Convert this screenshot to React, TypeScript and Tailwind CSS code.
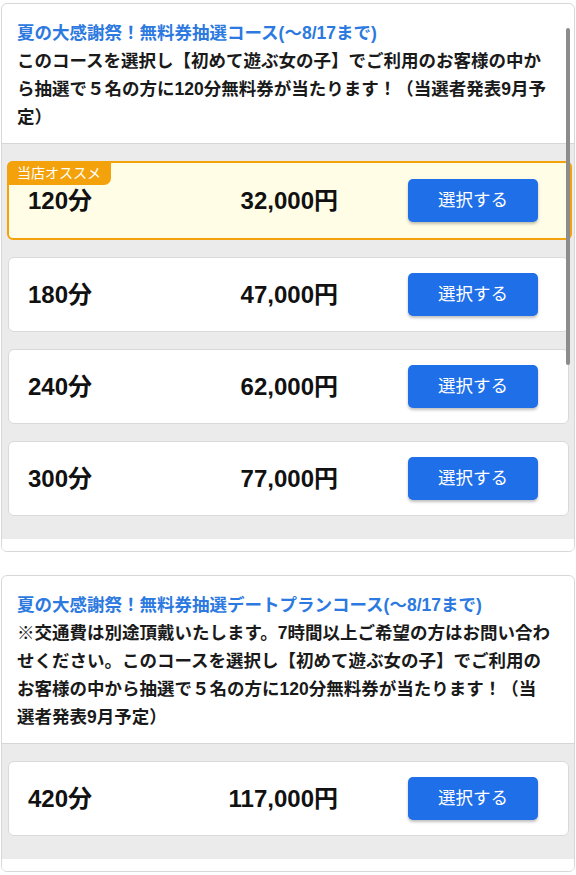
import React from "react";

type Row = { name: string; price: string; rec?: boolean };

const font = {
  fontFamily: '"Liberation Sans", "Noto Sans CJK JP", sans-serif',
};

function Btn() {
  return (
    <button className="ml-[70px] w-[130px] h-[43px] shrink-0 rounded-[5px] bg-[#1f6fe8] text-white text-[17.5px] shadow-[0_2px_3px_rgba(0,0,0,0.25)]">
      選択する
    </button>
  );
}

function PlanRow({ r }: { r: Row }) {
  if (r.rec) {
    return (
      <div className="relative ml-[-1px] mr-[-3px] h-[79px] rounded-[6px] border-2 border-[#f4a20c] bg-[#fffde6] flex items-center pl-[19px] pr-[32px]">
        <div className="absolute left-[-2px] top-[-2px] h-[24px] px-[10px] flex items-center rounded-tl-[6px] rounded-br-[7px] bg-[#f4a20c] text-white text-[14px] leading-none">
          当店オススメ
        </div>
        <div className="w-[110px] text-[24px] font-semibold text-[#111] pt-[1px]">{r.name}</div>
        <div className="flex-1 text-right text-[24px] font-semibold text-[#111] pt-[1px]">{r.price}</div>
        <Btn />
      </div>
    );
  }
  return (
    <div className="h-[75px] rounded-[6px] border border-[#d9d9d9] bg-white flex items-center pl-[19px] pr-[30px]">
      <div className="w-[110px] text-[24px] font-semibold text-[#111]">{r.name}</div>
      <div className="flex-1 text-right text-[24px] font-semibold text-[#111]">{r.price}</div>
      <Btn />
    </div>
  );
}

function Card({
  title,
  body,
  rows,
}: {
  title: string;
  body: string;
  rows: Row[];
}) {
  return (
    <div className="rounded-[6px] border border-[#d8d8d8] overflow-hidden bg-white">
      <div className="pl-[15px] pr-[20.5px] pt-[15px] pb-[12px] border-b border-[#d6d6d6] text-[17.5px] leading-[28px] font-bold [text-spacing-trim:space-all]">
        <div className="text-[#2c79e0]">{title}</div>
        <div className="text-[#1a1a1a]">{body}</div>
      </div>
      <div className="bg-[#ebebeb] pl-[6px] pr-[5px] pt-[17px] pb-[23px] flex flex-col gap-[17px]">
        {rows.map((r) => (
          <PlanRow key={r.name} r={r} />
        ))}
      </div>
      <div className="h-[12px] bg-white" />
    </div>
  );
}

export default function App() {
  return (
    <div className="relative min-h-[875px] bg-white px-[1px] pt-[3px] flex flex-col gap-[23px]" style={font}>
      <Card
        title="夏の大感謝祭！無料券抽選コース(〜8/17まで)"
        body="このコースを選択し【初めて遊ぶ女の子】でご利用のお客様の中から抽選で５名の方に120分無料券が当たります！（当選者発表9月予定）"
        rows={[
          { name: "120分", price: "32,000円", rec: true },
          { name: "180分", price: "47,000円" },
          { name: "240分", price: "62,000円" },
          { name: "300分", price: "77,000円" },
        ]}
      />
      <Card
        title="夏の大感謝祭！無料券抽選デートプランコース(〜8/17まで)"
        body="※交通費は別途頂戴いたします。7時間以上ご希望の方はお問い合わせください。このコースを選択し【初めて遊ぶ女の子】でご利用のお客様の中から抽選で５名の方に120分無料券が当たります！（当選者発表9月予定）"
        rows={[{ name: "420分", price: "117,000円" }]}
      />
      <div className="absolute left-[566px] top-[28px] w-[4px] h-[337px] rounded-full bg-[#8c8c8c]" />
    </div>
  );
}
